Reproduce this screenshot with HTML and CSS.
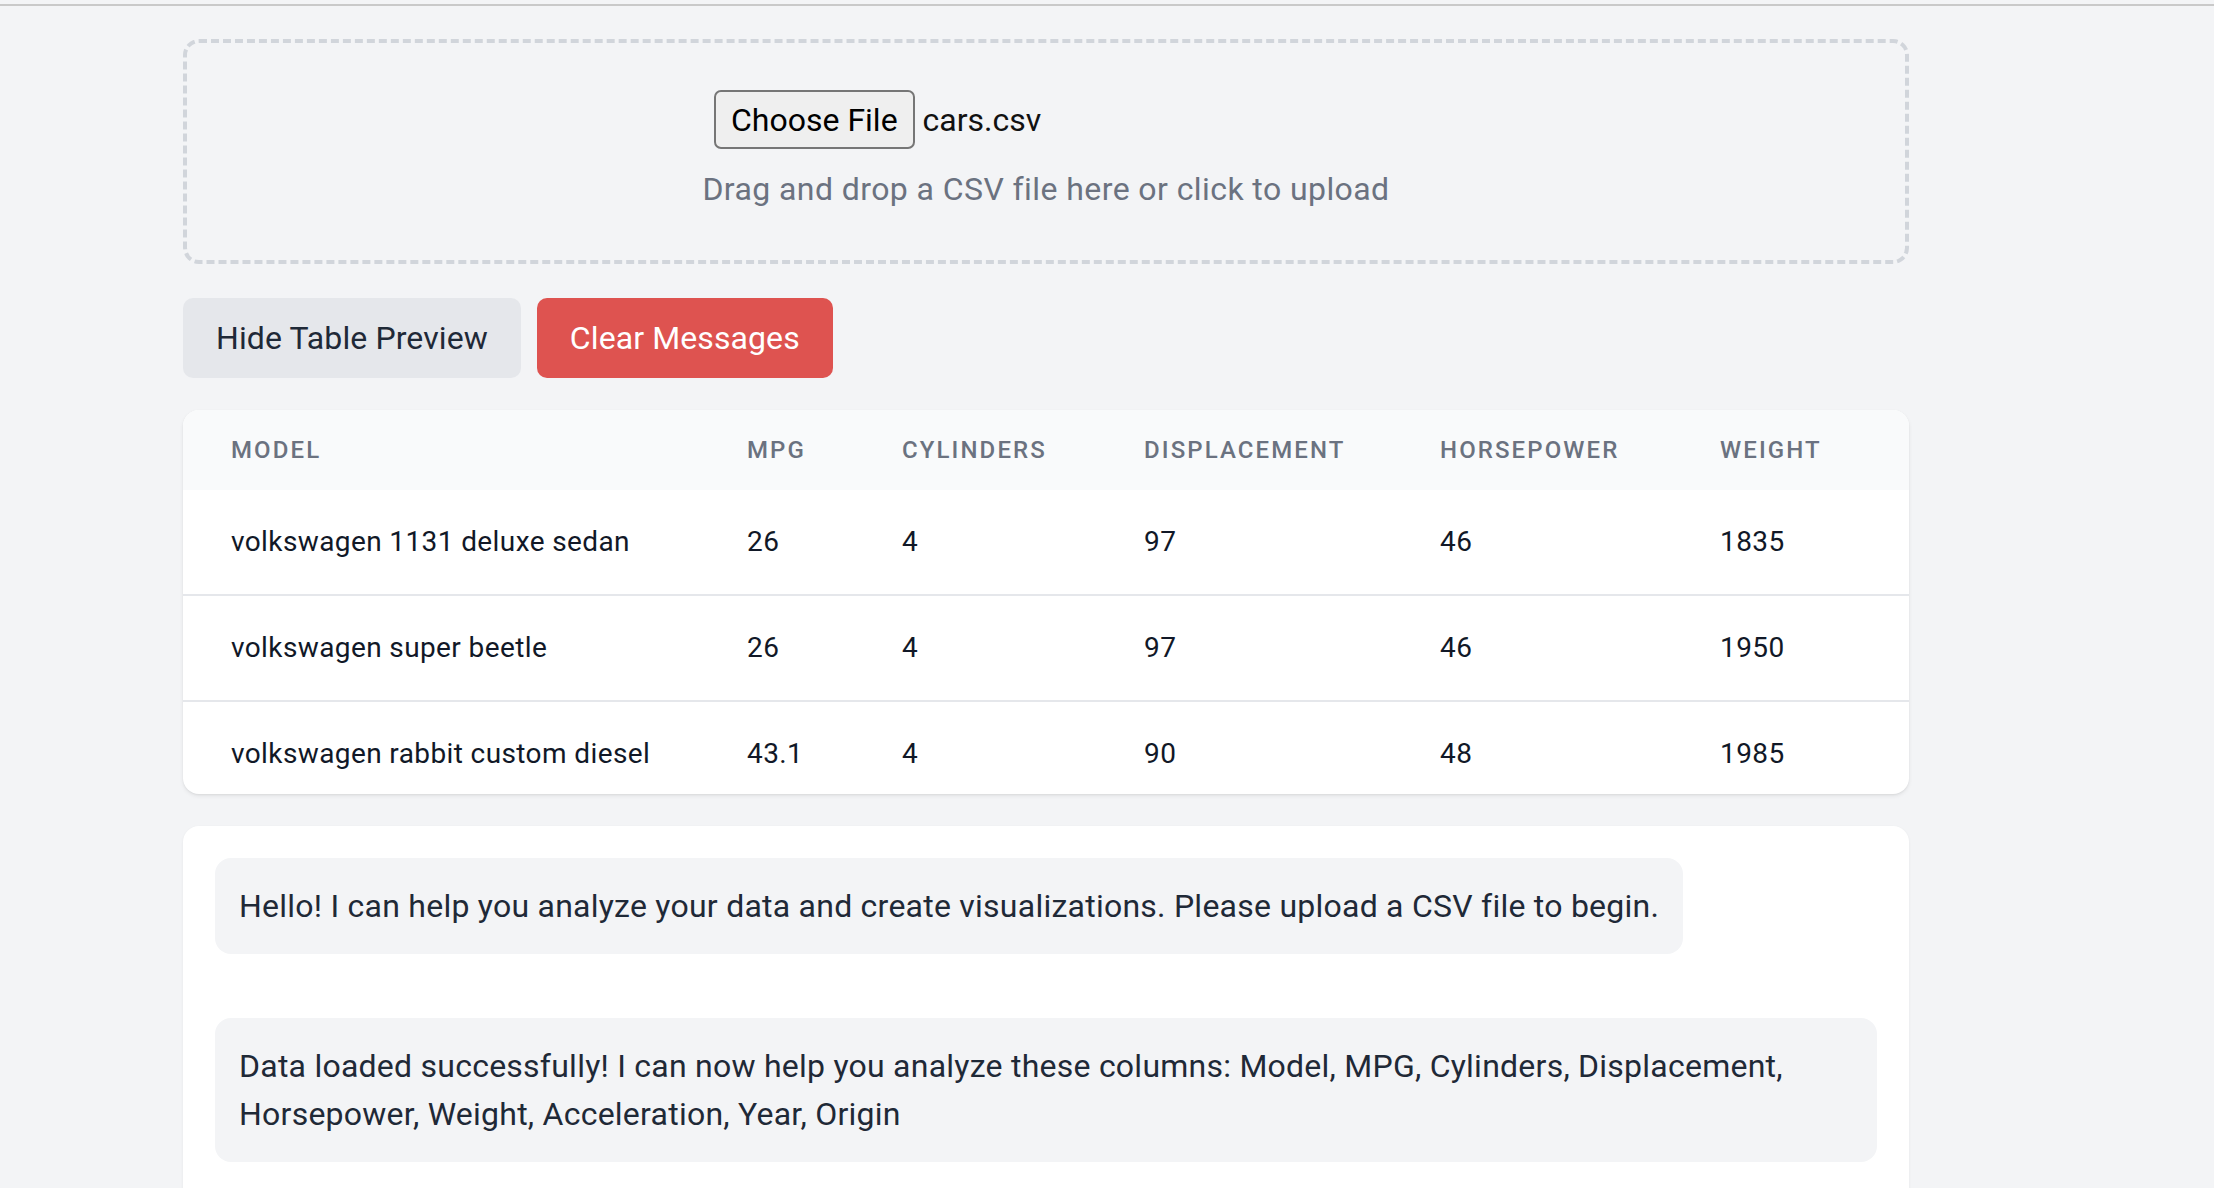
FILE: index.html
```html
<!DOCTYPE html>
<html lang="en">
<head>
<meta charset="utf-8">
<title>CSV Analyzer</title>
<link rel="stylesheet" href="styles.css">
</head>
<body>
<div class="topline"></div>
<main class="container">
  <section class="dropzone">
    <div class="file-input">
      <span class="file-btn">Choose File</span>
      <span class="file-name">cars.csv</span>
    </div>
    <p class="drop-hint">Drag and drop a CSV file here or click to upload</p>
  </section>

  <div class="actions">
    <button class="btn btn-gray">Hide Table Preview</button>
    <button class="btn btn-red">Clear Messages</button>
  </div>

  <div class="table-card">
    <table class="preview">
      <colgroup>
        <col class="c-model"><col class="c-mpg"><col class="c-cyl"><col class="c-disp"><col class="c-hp"><col class="c-wt">
      </colgroup>
      <thead>
        <tr><th>Model</th><th>MPG</th><th>Cylinders</th><th>Displacement</th><th>Horsepower</th><th>Weight</th></tr>
      </thead>
      <tbody>
        <tr><td>volkswagen 1131 deluxe sedan</td><td>26</td><td>4</td><td>97</td><td>46</td><td>1835</td></tr>
        <tr><td>volkswagen super beetle</td><td>26</td><td>4</td><td>97</td><td>46</td><td>1950</td></tr>
        <tr><td>volkswagen rabbit custom diesel</td><td>43.1</td><td>4</td><td>90</td><td>48</td><td>1985</td></tr>
      </tbody>
    </table>
  </div>

  <section class="messages">
    <div class="bubble">Hello! I can help you analyze your data and create visualizations. Please upload a CSV file to begin.</div>
    <div class="bubble">Data loaded successfully! I can now help you analyze these columns: Model, MPG, Cylinders, Displacement, Horsepower, Weight, Acceleration, Year, Origin</div>
  </section>
</main>
</body>
</html>
```

FILE: styles.css
```css
* { box-sizing: border-box; }

html, body {
  margin: 0;
  background: #f3f4f6;
}

body {
  font-family: Roboto, "Liberation Sans", Arial, sans-serif;
  color: #1f2937;
  letter-spacing: 0.015em;
}

.topline {
  height: 6px;
  border-bottom: 2px solid #c9c9c9;
}

.container {
  width: 1726px;
  margin-left: 183px;
  padding-top: 33px;
}

.dropzone {
  border: 4px dashed #d1d5db;
  border-radius: 16px;
  padding: 47px 0;
  display: flex;
  flex-direction: column;
  align-items: center;
}

.file-input {
  width: 664px;
  display: flex;
  align-items: center;
  height: 59px;
  letter-spacing: 0;
}

.file-btn {
  height: 59px;
  display: flex;
  align-items: center;
  padding: 0 15px;
  border: 2px solid #767676;
  border-radius: 7px;
  background: #efefef;
  color: #000;
  font-size: 32px;
}

.file-name {
  margin-left: 8px;
  font-size: 32px;
  color: #111;
}

.drop-hint {
  margin: 16px 0 0;
  font-size: 32px;
  line-height: 48px;
  color: #6b7280;
  letter-spacing: 0.013em;
}

.actions {
  margin-top: 34px;
  display: flex;
  gap: 16px;
}

.btn {
  font-family: inherit;
  font-size: 32px;
  line-height: 48px;
  letter-spacing: 0.003em;
  padding: 16px 33px;
  border: 0;
  border-radius: 10px;
  cursor: pointer;
}

.btn-gray {
  background: #e5e7eb;
  color: #1f2937;
}

.btn-red {
  background: #de5350;
  color: #fff;
}

.table-card {
  margin-top: 32px;
  background: #fff;
  border-radius: 16px;
  box-shadow: 0 2px 4px rgba(0, 0, 0, 0.07), 0 1px 2px rgba(0, 0, 0, 0.05);
  max-height: 384px;
  overflow: hidden;
}

.preview {
  width: 1726px;
  table-layout: fixed;
  border-collapse: collapse;
}

.c-model { width: 516px; }
.c-mpg { width: 155px; }
.c-cyl { width: 242px; }
.c-disp { width: 296px; }
.c-hp { width: 280px; }
.c-wt { width: 237px; }

.preview th {
  background: #f9fafb;
  text-align: left;
  padding: 24px 48px;
  font-size: 24px;
  line-height: 32px;
  font-weight: 500;
  letter-spacing: 2.1px;
  text-transform: uppercase;
  color: #6b7280;
  white-space: nowrap;
}

.preview td {
  padding: 32px 48px;
  font-size: 28px;
  line-height: 40px;
  letter-spacing: 0.014em;
  color: #111827;
  white-space: nowrap;
}

.preview tbody tr + tr td {
  border-top: 2px solid #e5e7eb;
}

.messages {
  margin-top: 32px;
  background: #fff;
  border-radius: 16px;
  box-shadow: 0 1px 3px rgba(0, 0, 0, 0.06);
  padding: 32px 32px 60px;
  display: flex;
  flex-direction: column;
  align-items: flex-start;
  gap: 64px;
}

.bubble {
  background: #f3f4f6;
  border-radius: 16px;
  padding: 24px;
  font-size: 32px;
  line-height: 48px;
  color: #1f2937;
  max-width: 100%;
}
```
